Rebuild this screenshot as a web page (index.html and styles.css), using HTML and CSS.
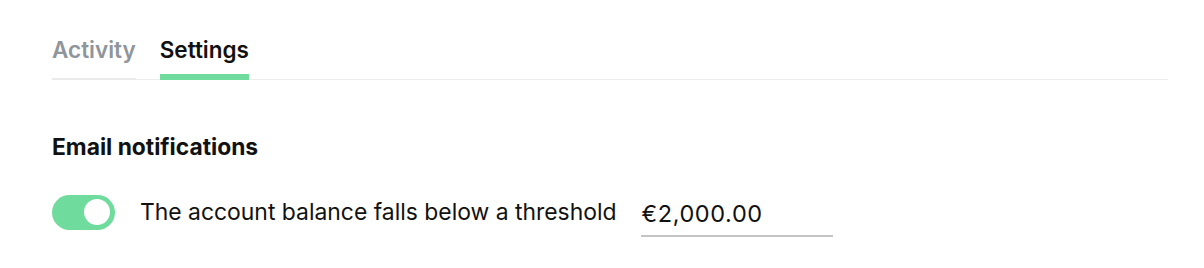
FILE: index.html
```html
<!DOCTYPE html>
<html>
<head>
<meta charset="utf-8">
<link rel="stylesheet" href="styles.css">
</head>
<body>
<div class="page">
  <nav class="tabs">
    <div class="tab">Activity</div>
    <div class="tab active">Settings</div>
  </nav>
  <section class="section">
    <h2 class="heading">Email notifications</h2>
    <div class="row">
      <span class="toggle"><span class="knob"></span></span>
      <span class="label">The account balance falls below a threshold</span>
      <span class="amount">€2,000.00</span>
    </div>
  </section>
</div>
</body>
</html>
```
FILE: styles.css
```css
* { box-sizing: border-box; }
html, body { margin: 0; padding: 0; background: #fff; }
body { font-family: Inter, "Noto Sans", sans-serif; color: #111; }
.page { padding: 32px 36px 0 52px; }
.tabs {
  display: flex;
  gap: 24px;
  border-bottom: 1px solid #ececec;
}
.tab {
  font-size: 22.5px;
  font-weight: 600;
  color: #8f959b;
  padding: 4px 0 15px;
  border-bottom: 2px solid #eaeaea;
  margin-bottom: -1px;
  line-height: 27px;
}
.tab.active {
  color: #111;
  border-bottom: 6px solid #6fdb9c;
  border-radius: 3px 3px 0 0;
  padding-bottom: 11px;
}
.section { padding-top: 53px; }
.heading {
  margin: 0;
  font-size: 22.8px;
  font-weight: 700;
  line-height: 28px;
}
.row {
  display: flex;
  align-items: center;
  margin-top: 26px;
}
.toggle {
  width: 63px;
  height: 35px;
  border-radius: 18px;
  background: #6fdb9c;
  display: flex;
  align-items: center;
  justify-content: flex-end;
  padding-right: 5px;
}
.knob {
  width: 26px;
  height: 26px;
  border-radius: 50%;
  background: #fff;
}
.label {
  margin-left: 25px;
  font-size: 22.9px;
}
.amount {
  margin-left: 25px;
  width: 192px;
  font-size: 23.5px;
  letter-spacing: 0.6px;
  padding: 2px 0 7px;
  border-bottom: 2px solid #c4c4c4;
  margin-top: 10px;
}
```
